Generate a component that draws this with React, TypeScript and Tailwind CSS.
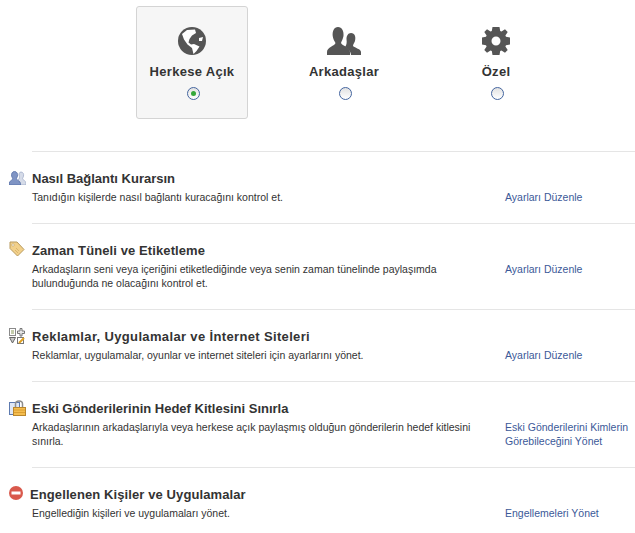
import React from 'react';

const font = "[font-family:'Liberation_Sans',Arial,sans-serif]";

const GlobeIcon = () => (
  <svg width="28" height="28" viewBox="0 0 28 28">
    <circle cx="14" cy="14" r="14" fill="#555" />
    <path d="M4 7 L9 3 L17 2.500 L18 6 L14 8.500 L11.500 12 L10.500 15.500 L13 17.500 L16 17 L21.500 19.500 L18.500 24 L15.500 27 L14 21 L9.500 17.500 L6 12.500 Z" fill="#fff" />
    <path d="M21 11 L25 10 L24 14 L21 14 Z" fill="#fff" />
  </svg>
);

const FriendsIcon = () => (
  <svg width="34" height="28" viewBox="0 0 34 28">
    <path d="M24 6 C28 6 29 10 28 14 C27.500 16 26 17 26 19 C28 21 34 22 34 25 L34 28 L24 28 C24 24 20 21 18 20 C19.500 18 20 16 19.500 12 C19.500 9 21 6 24 6 Z" fill="#555" />
    <path d="M11 0 C15 0 17 4 16.500 9 C16 12 14.500 14 14 16 C15 19 23 20 23 25 L23 28 L0 28 L0 25 C0 20 8 19 8.500 16 C7.500 14 6 12 5.700 9 C5.300 4 7 0 11 0 Z" fill="#555" />
  </svg>
);

const GearIcon = () => (
  <svg width="28" height="28" viewBox="0 0 28 28">
    <path
      fillRule="evenodd"
      d="M10.500 0 H17.500 L18.200 4 L19.500 4.600 L23 2.300 L25.700 5 L23.400 8.500 L24 9.800 L28 10.500 V17.500 L24 18.200 L23.400 19.500 L25.700 23 L23 25.700 L19.500 23.400 L18.200 24 L17.500 28 H10.500 L9.800 24 L8.500 23.400 L5 25.700 L2.300 23 L4.600 19.500 L4 18.200 L0 17.500 V10.500 L4 9.800 L4.600 8.500 L2.300 5 L5 2.300 L8.500 4.600 L9.800 4 Z M14 9.500 A4.500 4.500 0 1 0 14 18.500 A4.500 4.500 0 1 0 14 9.500 Z"
      fill="#555"
    />
  </svg>
);

const PeopleIcon = () => (
  <svg width="17" height="14" viewBox="0 0 17 14">
    <path d="M12 1 C14 1 15 3 14.500 5 C14.300 6.500 13.500 7 13.500 8 C14 9 17 10 17 12 V14 H9 V9 C10.500 8 11 6 10 4 C10 2.500 10.500 1 12 1 Z" fill="#d5dbe8" stroke="#9aa6c4" strokeWidth="0.7" />
    <path d="M5.500 0.500 C8 0.500 9 3 8.500 5 C8.200 6.500 7.500 7 7.500 8 C8 9.500 11.500 10 11.500 12.500 V14 H0 V12.500 C0 10 3.200 9.500 3.700 8 C3.700 7 2.900 6.500 2.600 5 C2.200 3 3 0.500 5.500 0.500 Z" fill="#7f94c4" stroke="#4e69a2" strokeWidth="0.7" />
  </svg>
);

const TagIcon = () => (
  <svg width="16" height="16" viewBox="0 0 16 16">
    <path d="M1 1 H8 L15 8.500 L8.500 15 L1 7.500 Z" fill="#f2d08a" stroke="#b89a5e" strokeWidth="1" strokeLinejoin="round" />
    <circle cx="4" cy="4" r="1.200" fill="#fff" stroke="#b89a5e" strokeWidth="0.6" />
    <path d="M7 7 L10 10 M6 9 L9 12" stroke="#d9b56e" strokeWidth="1" />
  </svg>
);

const AppsIcon = () => (
  <svg width="16" height="16" viewBox="0 0 16 16">
    <rect x="0.500" y="0.500" width="6" height="7" fill="#fff" stroke="#8a8a8a" />
    <path d="M2 3 H5 M2 5 H5" stroke="#8a9a5a" strokeWidth="1" />
    <path d="M11 0.500 H13 V3 H15.500 V5.500 H13 V8 H11 V5.500 H8.500 V3 H11 Z" fill="#e8e8e8" stroke="#777" />
    <path d="M0.500 9.500 H6.500 L3.500 15 Z" fill="#c8c8c8" stroke="#666" />
    <rect x="8.500" y="9.500" width="6" height="6" fill="#fff" stroke="#777" />
    <path d="M10 15 L15 10" stroke="#e0a020" strokeWidth="2" />
  </svg>
);

const LockIcon = () => (
  <svg width="17" height="16" viewBox="0 0 17 16">
    <rect x="0.500" y="2.500" width="10" height="12" fill="#dfe7f5" stroke="#5d7ab0" />
    <path d="M6.500 8 V4 C6.500 0 13.500 0 13.500 4 V8" fill="none" stroke="#8d8d8d" strokeWidth="1.500" />
    <rect x="4.500" y="7.500" width="12" height="8" fill="#f4bd4f" stroke="#b9862c" />
    <path d="M5 10 H16 M5 12.500 H16" stroke="#dc9f32" strokeWidth="1" />
  </svg>
);

const BlockedIcon = () => (
  <svg width="14" height="14" viewBox="0 0 14 14">
    <circle cx="7" cy="7" r="7" fill="#d9594c" />
    <rect x="2.500" y="5.500" width="9" height="3" fill="#fff" />
  </svg>
);

const tiles = [
  { label: 'Herkese Açık', icon: <GlobeIcon />, selected: true },
  { label: 'Arkadaşlar', icon: <FriendsIcon />, selected: false },
  { label: 'Özel', icon: <GearIcon />, selected: false },
];

const rows = [
  {
    icon: <PeopleIcon />,
    iconTop: 'pt-5',
    titleClass: '',
    title: 'Nasıl Bağlantı Kurarsın',
    text: 'Tanıdığın kişilerde nasıl bağlantı kuracağını kontrol et.',
    link: 'Ayarları Düzenle',
  },
  {
    icon: <TagIcon />,
    iconTop: 'pt-[18px]',
    titleClass: 'tracking-[0.1px]',
    title: 'Zaman Tüneli ve Etiketleme',
    text: 'Arkadaşların seni veya içeriğini etiketlediğinde veya senin zaman tünelinde paylaşımda bulunduğunda ne olacağını kontrol et.',
    link: 'Ayarları Düzenle',
  },
  {
    icon: <AppsIcon />,
    iconTop: 'pt-[19px]',
    titleClass: 'tracking-[0.35px]',
    title: 'Reklamlar, Uygulamalar ve İnternet Siteleri',
    text: 'Reklamlar, uygulamalar, oyunlar ve internet siteleri için ayarlarını yönet.',
    link: 'Ayarları Düzenle',
  },
  {
    icon: <LockIcon />,
    iconTop: 'pt-[19px]',
    titleClass: '',
    title: 'Eski Gönderilerinin Hedef Kitlesini Sınırla',
    text: 'Arkadaşlarının arkadaşlarıyla veya herkese açık paylaşmış olduğun gönderilerin hedef kitlesini sınırla.',
    link: 'Eski Gönderilerini Kimlerin Görebileceğini Yönet',
  },
  {
    icon: <BlockedIcon />,
    iconTop: 'pt-[19px]',
    titleClass: '-ml-0.5 tracking-[0.1px]',
    title: 'Engellenen Kişiler ve Uygulamalar',
    text: 'Engellediğin kişileri ve uygulamaları yönet.',
    link: 'Engellemeleri Yönet',
  },
];

const App: React.FC = () => {
  return (
    <div className={`${font} w-[635px] h-[533px] overflow-hidden bg-white text-[#333]`}>
      {/* Audience tiles */}
      <div className="flex pl-[116px] pt-[6px] h-[151px]">
        {tiles.map((tile) => (
          <div key={tile.label} className="w-[152px] flex justify-center">
            <div
              className={`w-[112px] h-[113px] flex flex-col items-center rounded-[3px] border ${
                tile.selected ? 'border-[#d4d4d4] bg-[#f6f6f6]' : 'border-transparent'
              }`}
            >
              <div className="h-[28px] mt-[20px] flex items-center">{tile.icon}</div>
              <div className="mt-[8px] text-[13px] leading-[18px] font-bold tracking-[0.3px] text-[#333]">
                {tile.label}
              </div>
              <div className="mt-[6px] ml-[2px] w-[13px] h-[13px] rounded-full border border-[#44659f] bg-gradient-to-b from-[#e2e2e2] to-white flex items-center justify-center">
                {tile.selected && <div className="w-[5px] h-[5px] rounded-full bg-[#35a83a]" />}
              </div>
            </div>
          </div>
        ))}
      </div>

      {/* Settings rows */}
      {rows.map((row) => (
        <div key={row.title} className="flex">
          <div className={`w-[32px] pl-[9px] shrink-0 ${row.iconTop}`}>{row.icon}</div>
          <div className="flex-1 flex border-t border-[#e5e5e5] pt-[19px] pb-[19px]">
            <div className="w-[473px] shrink-0">
              <div className={`text-[13px] leading-4 font-bold text-[#333] mb-[3px] ${row.titleClass}`}>
                {row.title}
              </div>
              <div className="w-[445px] text-[10.5px] leading-[14px] text-[#333]">{row.text}</div>
            </div>
            <div className="pt-[19px] w-[125px] text-[10.5px] leading-[14px] text-[#3b5998]">{row.link}</div>
          </div>
        </div>
      ))}
    </div>
  );
};

export default App;
